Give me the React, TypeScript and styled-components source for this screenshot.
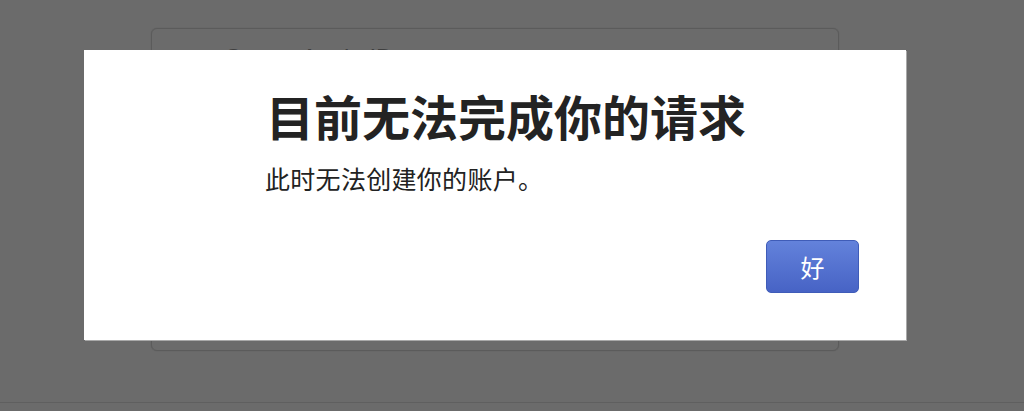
import styled, { createGlobalStyle } from "styled-components";

const GlobalStyle = createGlobalStyle`
    html, body {
        margin: 0;
        padding: 0;
        background: #6b6b6b;
        font-family: "Noto Sans CJK SC", "Noto Sans", sans-serif;
    }
`;

const Screen = styled.div`
    position: relative;
    width: 1024px;
    height: 411px;
    overflow: hidden;
    background: #6b6b6b;
    display: flex;
    flex-direction: column;
`;

const Stage = styled.div`
    flex: 1;
    padding: 28px 0 0 151px;
`;

const BackCard = styled.div`
    width: 688px;
    height: 323px;
    border: 1px solid #5b5b5b;
    border-radius: 6px;
    padding: 15px 0 0 72px;
    box-sizing: border-box;
    box-shadow: 0 0 1px rgba(0, 0, 0, 0.25);
    h2 {
        margin: 0;
        font-size: 24px;
        font-weight: 400;
        color: #3f3f3f;
        font-family: "Liberation Sans", sans-serif;
    }
`;

const Footer = styled.div`
    height: 8px;
    border-top: 1px solid #5f5f5f;
`;

const Dialog = styled.div`
    position: absolute;
    left: 84px;
    top: 50px;
    width: 822px;
    height: 290px;
    box-sizing: border-box;
    background: #fff;
    box-shadow: 1px 1px 0 #a9a9a9;
    padding: 33px 47px 0 182px;
    display: flex;
    flex-direction: column;
`;

const Title = styled.h1`
    margin: 0;
    font-size: 48px;
    font-weight: 600;
    line-height: 64px;
    color: #232323;
`;

const Message = styled.p`
    margin: 15px 0 0 -1px;
    font-size: 25px;
    line-height: 32px;
    color: #222;
    letter-spacing: 0.3px;
`;

const Actions = styled.div`
    margin-top: auto;
    margin-bottom: 47px;
    display: flex;
    justify-content: flex-end;
`;

const OkButton = styled.button`
    width: 93px;
    height: 53px;
    border: 1px solid #3f5cb8;
    border-radius: 5px;
    background: linear-gradient(#6382db, #4763c5);
    color: #fff;
    font-family: "Noto Sans CJK SC", sans-serif;
    font-size: 24px;
    cursor: pointer;
`;

export default function App() {
    return (
        <>
            <GlobalStyle />
            <Screen>
                <Stage>
                    <BackCard>
                        <h2>Create Apple ID</h2>
                    </BackCard>
                </Stage>
                <Footer />
                <Dialog role="alertdialog">
                    <Title>目前无法完成你的请求</Title>
                    <Message>此时无法创建你的账户。</Message>
                    <Actions>
                        <OkButton type="button">好</OkButton>
                    </Actions>
                </Dialog>
            </Screen>
        </>
    );
}
